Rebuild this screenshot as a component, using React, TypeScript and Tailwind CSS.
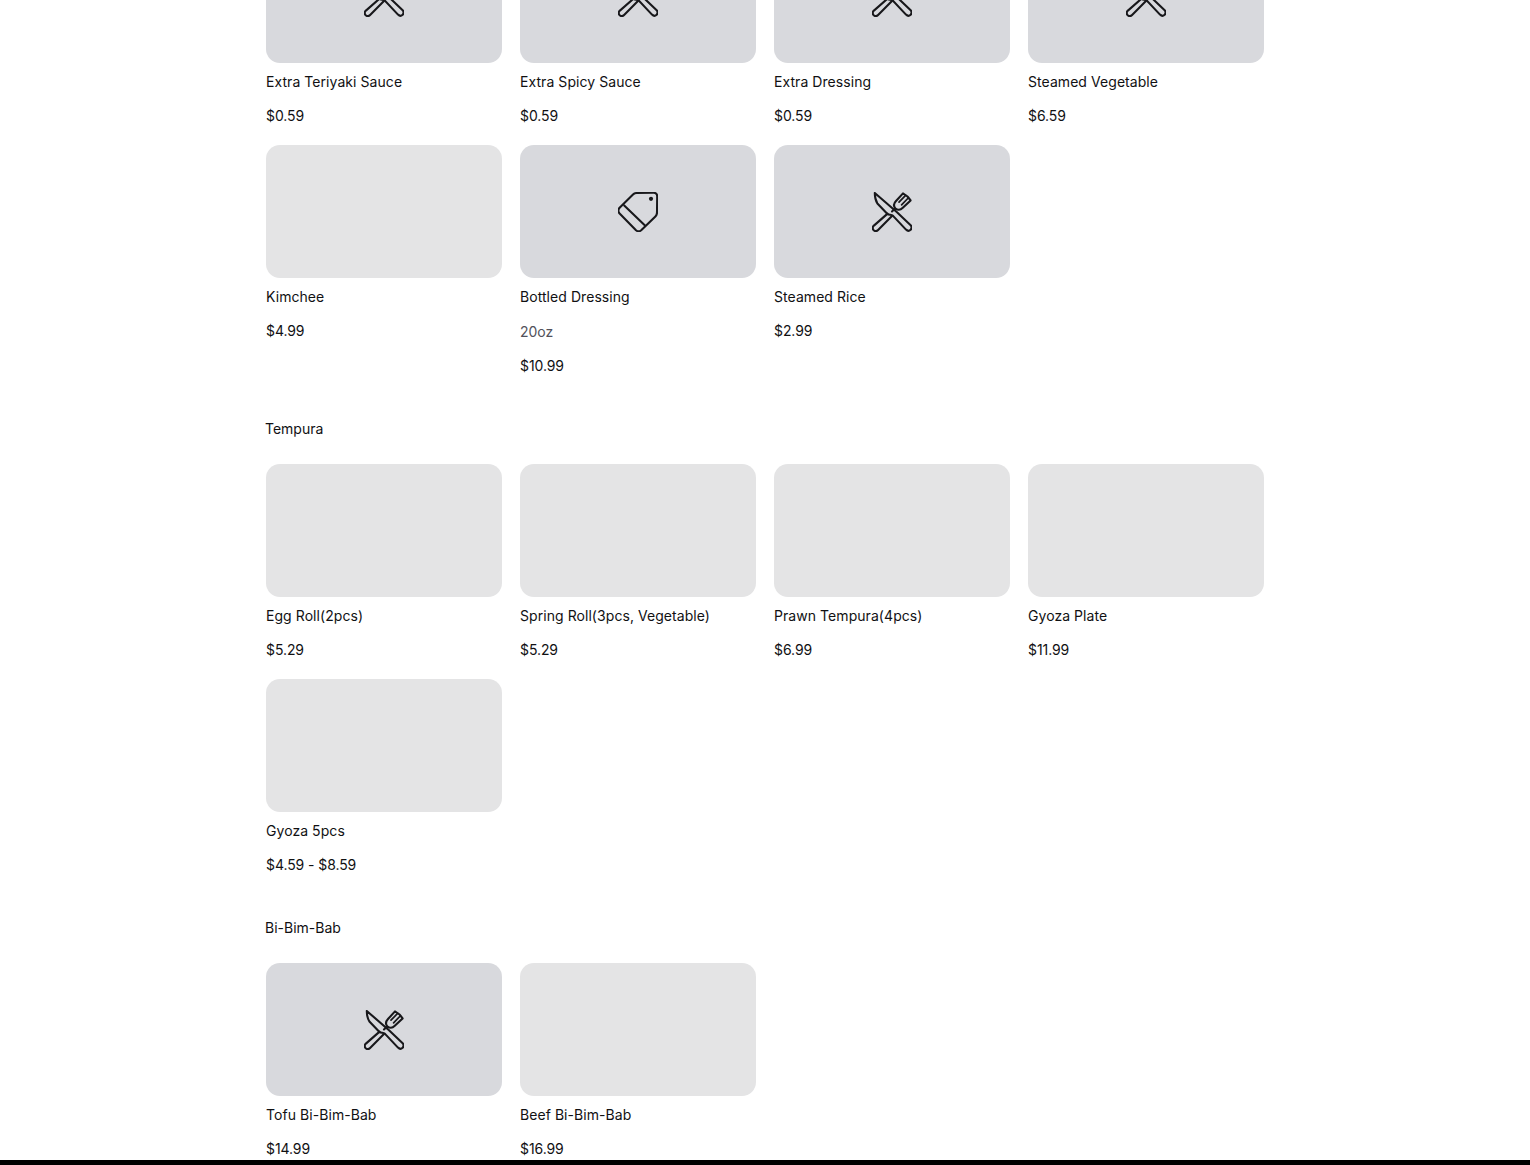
const font = { fontFamily: "Inter, sans-serif" };

function ForkKnife() {
  return (
    <svg width="40" height="40" viewBox="0 0 40 40" fill="none" stroke="#18181b" strokeWidth="2.1" strokeLinejoin="round" strokeLinecap="round">
      <path d="M2.8 1 L25 20.2 L38.4 33 C39.8 34.4 39.8 36.4 38.6 37.7 C37.3 39 35.4 39 34 37.6 L20.8 23.6 C19 22.6 17 23 15.2 21.8 L5.4 11.5 C3.6 8.6 2.8 5 2.8 1 Z" />
      <path d="M15.6 21.6 L1.9 33.6 C0.5 35 0.5 37 1.7 38.2 C3 39.4 4.9 39.2 6.1 38 L20.2 23.8" />
      <path d="M31 1.4 L24 9 C21.6 11.6 21.4 14 23.2 16.2 C25.6 18.2 28.6 18 30.8 15.8 L38.6 8.4 C36.6 5.4 33.8 2.8 31 1.4 Z M23.2 16.2 L20 19.4" />
      <path d="M33.6 3.4 L27 10.2 M36.2 6 L29.6 12.8" strokeWidth="1.7" />
    </svg>
  );
}

function Tag() {
  return (
    <svg width="40" height="40" viewBox="0 0 40 40" fill="none" stroke="#18181b" strokeWidth="2.1" strokeLinejoin="round" strokeLinecap="round">
      <path d="M1.6 15.8 L15 2.6 C16 1.6 17.2 1 18.8 1 L35.6 0.8 C37.8 0.8 39.2 2.2 39.2 4.4 L39 20.6 C39 22.2 38.4 23.4 37.4 24.4 L23.2 38.2 C21.6 39.6 19.6 39.6 18 38.2 L1.6 21.6 C0.2 20 0.2 17.4 1.6 15.8 Z" />
      <path d="M6.2 13.4 L27 33.6" />
      <circle cx="33" cy="6.8" r="2.1" fill="#18181b" stroke="none" />
    </svg>
  );
}

type Item = { name: string; price: string; icon?: "fork" | "tag"; note?: string };

function Card({ item }: { item: Item }) {
  return (
    <div className="flex flex-col">
      <div className={`flex h-[133px] items-center justify-center rounded-[14px] ${item.icon ? "bg-[#d8d9dd]" : "bg-[#e4e4e5]"}`}>
        {item.icon === "fork" && <ForkKnife />}
        {item.icon === "tag" && <Tag />}
      </div>
      <div className="mt-[9px] text-sm leading-5 tracking-[0.06px] text-[#111113]">{item.name}</div>
      {item.note && <div className="mt-[15px] text-sm leading-5 text-[#52525b]">{item.note}</div>}
      <div className="mt-[14px] text-sm leading-5 tracking-[-0.08px] text-[#111113]">{item.price}</div>
    </div>
  );
}

function Grid({ items }: { items: Item[] }) {
  return (
    <div className="ml-px grid grid-cols-[repeat(4,236px)] gap-x-[18px] gap-y-[19px]">
      {items.map((item) => (
        <Card key={item.name} item={item} />
      ))}
    </div>
  );
}

const sauces: Item[] = [
  { name: "Extra Teriyaki Sauce", price: "$0.59", icon: "fork" },
  { name: "Extra Spicy Sauce", price: "$0.59", icon: "fork" },
  { name: "Extra Dressing", price: "$0.59", icon: "fork" },
  { name: "Steamed Vegetable", price: "$6.59", icon: "fork" },
  { name: "Kimchee", price: "$4.99" },
  { name: "Bottled Dressing", note: "20oz", price: "$10.99", icon: "tag" },
  { name: "Steamed Rice", price: "$2.99", icon: "fork" },
];

const tempura: Item[] = [
  { name: "Egg Roll(2pcs)", price: "$5.29" },
  { name: "Spring Roll(3pcs, Vegetable)", price: "$5.29" },
  { name: "Prawn Tempura(4pcs)", price: "$6.99" },
  { name: "Gyoza Plate", price: "$11.99" },
  { name: "Gyoza 5pcs", price: "$4.59 - $8.59" },
];

const bibimbab: Item[] = [
  { name: "Tofu Bi-Bim-Bab", price: "$14.99", icon: "fork" },
  { name: "Beef Bi-Bim-Bab", price: "$16.99" },
];

function Section({ title, items }: { title: string; items: Item[] }) {
  return (
    <section className="mt-[43px]">
      <h2 className="mb-[25px] text-sm leading-5 text-[#111113]">{title}</h2>
      <Grid items={items} />
    </section>
  );
}

export default function App() {
  return (
    <div className="flex h-[1165px] flex-col overflow-hidden bg-white" style={font}>
      <div className="min-h-0 flex-1 overflow-hidden">
        <main className="-mt-[70px] ml-[265px] w-[1000px]">
          <Grid items={sauces} />
          <Section title="Tempura" items={tempura} />
          <Section title="Bi-Bim-Bab" items={bibimbab} />
        </main>
      </div>
      <div className="h-[5px] shrink-0 bg-black" />
    </div>
  );
}
